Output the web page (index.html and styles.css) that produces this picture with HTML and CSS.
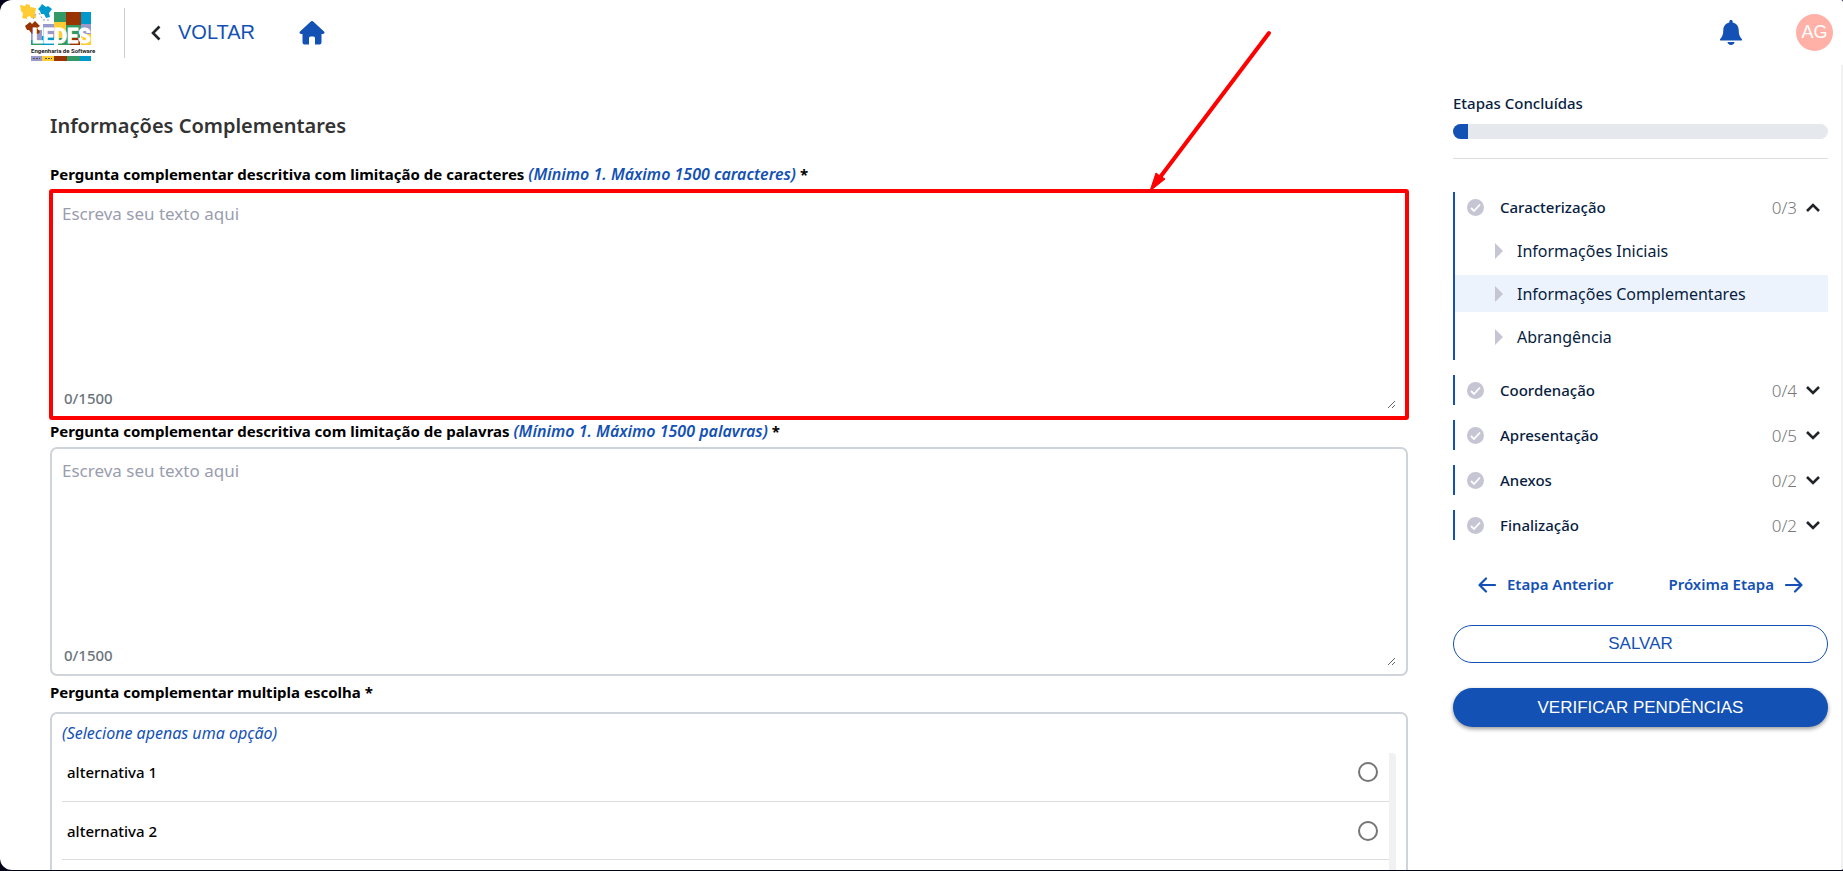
FILE: index.html
```html
<!DOCTYPE html>
<html lang="pt-BR">
<head>
<meta charset="utf-8">
<title>Informações Complementares</title>
<link rel="stylesheet" href="styles.css">
</head>
<body>
<div class="app">
  <header class="topbar">
    <svg class="logo" width="72" height="58" viewBox="20 4 72 58" role="img" aria-label="LEDES Engenharia de Software">
      <path fill="#339966" d="M54 12h12v10H54zM31 36h11v9H31zM66 33h14v12H66z"/>
      <path fill="#993300" d="M66 12h15v13H66zM66 38h14v7H66z"/>
      <path fill="#0099cc" d="M81 12h10v12H81zM42 36h12v9H42z"/>
      <path fill="#9999cc" d="M31 30h11v10H31zM43 24h11v12H43zM81 24h10v10H81z"/>
      <path fill="#ffcc33" d="M54 22h12v16H54zM81 34h10v11H81z"/>
      <path fill="#339966" d="M58 38h12v7H58zM66 25h15v9H66z"/>
      <path fill="#ffcc33" d="M20 5l5 1 1-2 4 1 0 2 6 1-1 6 1 4-5 0-1-2-3 1 0 2-5-1 1-5-2-2z"/>
      <path fill="#0099cc" d="M42 4l4 3 2-1 4 3-3 4 1 4-4 1-2-4-3 0-1-3-2-2 2-2z"/>
      <path fill="#993300" d="M25 26l5-4 2 2 3-3 5 5-3 2 3 4-2 2-3-1-3 1-3-4-2 0z"/>
      <path fill="none" stroke="#999" stroke-width="1" stroke-dasharray="2 2" d="M36 14l-3 5M39 13l4 7 7 0"/>
      <text class="logo-word" x="32" y="43">LEDES</text>
      <path fill="#fff" d="M30 45h62v10H30z"/>
      <text class="logo-sub" x="31" y="53">Engenharia de Software</text>
      <path fill="#9999cc" d="M31 56h11v5H31z"/><path fill="#ffcc33" d="M42 56h12v5H42z"/>
      <path fill="#993300" d="M54 56h13v5H54z"/><path fill="#339966" d="M67 56h13v5H67z"/>
      <path fill="#0099cc" d="M80 56h11v5H80z"/>
      <path stroke="#555" stroke-dasharray="2 1" d="M33 58.500h7M45 58.500h7"/>
    </svg>
    <a class="back" href="#">
      <svg width="10" height="16" viewBox="0 0 10 16"><path d="M8.500 1.500L2 8l6.500 6.500" fill="none" stroke="#212529" stroke-width="2.600"/></svg>
      VOLTAR
    </a>
    <a class="home" href="#" aria-label="Início">
      <svg width="26" height="24" viewBox="0 0 26 24" fill="#1351b4"><path d="M11.800.500a1.800 1.800 0 0 1 2.400 0L25 10.500c1 1 .4 2.500-1 2.500h-1.500v8.500a2 2 0 0 1-2 2H16V17a1.500 1.500 0 0 0-1.500-1.500h-3A1.500 1.500 0 0 0 10 17v6.500H5.500a2 2 0 0 1-2-2V13H2C.6 13 0 11.500 1 10.500z"/></svg>
    </a>
    <button class="bell" type="button" aria-label="Notificações">
      <svg width="22" height="26" viewBox="0 0 22 26" fill="#1351b4"><path d="M11 0c1 0 1.700.7 1.700 1.700v.7c3.800.8 6 3.700 6 7.600 0 4.500 1 6.700 3.100 9 .5.600.2 1.500-.7 1.500H.9c-.9 0-1.200-.9-.7-1.500 2.100-2.300 3.100-4.500 3.100-9 0-3.900 2.200-6.800 6-7.600v-.7C9.300.7 10 0 11 0zM7.500 22h7c0 1.600-1.500 3-3.500 3s-3.500-1.400-3.500-3z"/></svg>
    </button>
    <span class="avatar">AG</span>
  </header>
  <div class="body">
    <main class="form">
      <h1 class="title">Informações Complementares</h1>
      <label class="question" for="q1">Pergunta complementar descritiva com limitação de caracteres <em class="hint">(Mínimo 1. Máximo 1500 caracteres)</em> *</label>
      <div class="field field-marked">
        <textarea id="q1" class="entry" placeholder="Escreva seu texto aqui"></textarea>
        <span class="counter">0/1500</span>
        <svg class="arrow" width="126" height="166" viewBox="0 0 126 166"><path d="M122 5L14 148" stroke="#f00" stroke-width="4" stroke-linecap="round"/><path d="M3 163L9 145l4 3 5 3z" fill="#f00" stroke="#f00" stroke-width="1"/></svg>
      </div>
      <label class="question" for="q2">Pergunta complementar descritiva com limitação de palavras <em class="hint">(Mínimo 1. Máximo 1500 palavras)</em> *</label>
      <div class="field">
        <textarea id="q2" class="entry" placeholder="Escreva seu texto aqui"></textarea>
        <span class="counter">0/1500</span>
      </div>
      <fieldset class="choice">
        <legend class="question question-choice">Pergunta complementar multipla escolha *</legend>
        <div class="choice-box">
          <p class="choice-hint">(Selecione apenas uma opção)</p>
          <div class="options">
            <label class="option">alternativa 1<input class="radio" type="radio" name="alt"></label>
            <label class="option">alternativa 2<input class="radio" type="radio" name="alt"></label>
            <div class="option"></div>
          </div>
        </div>
      </fieldset>
    </main>
    <aside class="side">
      <h2 class="side-title">Etapas Concluídas</h2>
      <div class="progress"><div class="progress-fill"></div></div>
      <ul class="steps">
        <li class="step">
          <button class="step-head" type="button">
            <svg class="check" viewBox="0 0 17 17"><circle cx="8.500" cy="8.500" r="8.500" fill="#c5c5d3"/><path d="M4 9l3 3 6-6.500" fill="none" stroke="#fff" stroke-width="1.800"/></svg>
            <span class="step-name">Caracterização</span><span class="count">0/3</span>
            <svg class="chev" viewBox="0 0 14 9"><path d="M1 8l6-6 6 6" fill="none" stroke="#212529" stroke-width="2.600"/></svg>
          </button>
          <ul class="subs">
            <li><a class="sub" href="#">Informações Iniciais</a></li>
            <li><a class="sub sub-active" href="#">Informações Complementares</a></li>
            <li><a class="sub" href="#">Abrangência</a></li>
          </ul>
        </li>
        <li class="step">
          <button class="step-head" type="button">
            <svg class="check" viewBox="0 0 17 17"><circle cx="8.500" cy="8.500" r="8.500" fill="#c5c5d3"/><path d="M4 9l3 3 6-6.500" fill="none" stroke="#fff" stroke-width="1.800"/></svg>
            <span class="step-name">Coordenação</span><span class="count">0/4</span>
            <svg class="chev" viewBox="0 0 14 9"><path d="M1 1l6 6 6-6" fill="none" stroke="#212529" stroke-width="2.600"/></svg>
          </button>
        </li>
        <li class="step">
          <button class="step-head" type="button">
            <svg class="check" viewBox="0 0 17 17"><circle cx="8.500" cy="8.500" r="8.500" fill="#c5c5d3"/><path d="M4 9l3 3 6-6.500" fill="none" stroke="#fff" stroke-width="1.800"/></svg>
            <span class="step-name">Apresentação</span><span class="count">0/5</span>
            <svg class="chev" viewBox="0 0 14 9"><path d="M1 1l6 6 6-6" fill="none" stroke="#212529" stroke-width="2.600"/></svg>
          </button>
        </li>
        <li class="step">
          <button class="step-head" type="button">
            <svg class="check" viewBox="0 0 17 17"><circle cx="8.500" cy="8.500" r="8.500" fill="#c5c5d3"/><path d="M4 9l3 3 6-6.500" fill="none" stroke="#fff" stroke-width="1.800"/></svg>
            <span class="step-name">Anexos</span><span class="count">0/2</span>
            <svg class="chev" viewBox="0 0 14 9"><path d="M1 1l6 6 6-6" fill="none" stroke="#212529" stroke-width="2.600"/></svg>
          </button>
        </li>
        <li class="step">
          <button class="step-head" type="button">
            <svg class="check" viewBox="0 0 17 17"><circle cx="8.500" cy="8.500" r="8.500" fill="#c5c5d3"/><path d="M4 9l3 3 6-6.500" fill="none" stroke="#fff" stroke-width="1.800"/></svg>
            <span class="step-name">Finalização</span><span class="count">0/2</span>
            <svg class="chev" viewBox="0 0 14 9"><path d="M1 1l6 6 6-6" fill="none" stroke="#212529" stroke-width="2.600"/></svg>
          </button>
        </li>
      </ul>
      <nav class="pager">
        <button class="page-link" type="button"><svg width="18" height="16" viewBox="0 0 18 16"><path d="M17 8H2M8 1.500L1.500 8 8 14.500" fill="none" stroke="#1351b4" stroke-width="2.200" stroke-linecap="round" stroke-linejoin="round"/></svg>Etapa Anterior</button>
        <button class="page-link" type="button">Próxima Etapa<svg width="18" height="16" viewBox="0 0 18 16"><path d="M1 8h15M10 1.500L16.500 8 10 14.500" fill="none" stroke="#1351b4" stroke-width="2.200" stroke-linecap="round" stroke-linejoin="round"/></svg></button>
      </nav>
      <button class="btn btn-outline" type="button">SALVAR</button>
      <button class="btn btn-solid" type="button">VERIFICAR PENDÊNCIAS</button>
    </aside>
    <div class="track"></div>
  </div>
</div>
</body>
</html>
```

FILE: styles.css
```css
* { box-sizing: border-box; }
body { margin: 0; background: #03031a; font-family: "Noto Sans", sans-serif; color: #000; }
button { font: inherit; background: none; border: 0; padding: 0; }
ul { list-style: none; margin: 0; padding: 0; }
a { text-decoration: none; }
svg { display: block; flex: none; }

.app { height: calc(100vh - 1px); display: flex; flex-direction: column; overflow: hidden; background: #fff; border-radius: 12px 2px 2px 12px; }

.topbar { display: flex; align-items: center; height: 65px; flex: none; padding: 0 10px 0 20px; }
.logo { overflow: visible; }
.logo-word { font: bold 20px Roboto, sans-serif; fill: #fff; stroke: #fff; stroke-width: 1px; }
.logo-sub { font: bold 6px Roboto, sans-serif; fill: #222; }
.back { display: flex; align-items: center; gap: 17px; height: 50px; margin-left: 32px; padding-left: 26px; border-left: 1px solid #ccc; color: #1351b4; font: 20px "Liberation Sans", Arial, sans-serif; }
.home { margin-left: 44px; }
.bell { margin-left: auto; margin-right: 54px; }
.avatar { display: flex; align-items: center; justify-content: center; width: 37px; height: 37px; border-radius: 50%; background: #ffb1a8; color: #fff; font: 18px "Liberation Sans", Arial, sans-serif; }

.body { display: flex; flex: 1; min-height: 0; }
.form { flex: 1; min-width: 0; padding: 44px 0 0 50px; }
.title { margin: 0 0 23px; font: 600 20px/34px "Noto Sans", sans-serif; color: #333; }
.question { display: block; padding: 0 0 8px; font-weight: 700; font-size: 15px; line-height: 16px; }
.hint { color: #1351b4; font-size: 16px; font-weight: 600; line-height: 16px; }
.field { position: relative; height: 229px; margin-bottom: 4px; padding: 2px 10px 8px; border: 2px solid #ced4da; border-radius: 7px; }
.field-marked { outline: 4px solid #f00; outline-offset: -3px; border-radius: 2px; }
.entry { display: block; width: 100%; height: 100%; padding: 8px 0; border: 0; outline: 0; background: transparent; resize: vertical; font: 17px/24px "Noto Sans", sans-serif; }
.entry::placeholder { color: #9a9dae; opacity: 1; }
.counter { position: absolute; left: 12px; bottom: 9px; color: #6c757d; font-size: 15px; line-height: 20px; font-weight: 500; }
.arrow { position: absolute; right: 133px; bottom: 223px; }

.choice { margin: 0; padding: 0; border: 0; min-width: 0; }
.question-choice { line-height: 24px; }
.choice-box { padding: 7px 10px; border: 2px solid #ced4da; border-radius: 7px; }
.choice-hint { margin: 0 0 8px; color: #1351b4; font-style: italic; font-size: 16px; line-height: 24px; }
.options { border-right: 7px solid #f1f1f1; border-radius: 0 4px 0 0; }
.option { display: flex; align-items: center; justify-content: space-between; height: 58px; padding: 0 11px 0 5px; border-bottom: 1px solid #ddd; font-size: 15px; font-weight: 500; }
.option:first-child { height: 49px; padding-bottom: 10px; }
.radio { appearance: none; width: 20px; height: 20px; margin: 0; border: 2px solid #757575; border-radius: 50%; }

.side { flex: none; width: 375px; margin: 28px 13px 0 45px; }
.side-title { margin: 0 0 11px; color: #071d41; font-size: 15px; font-weight: 500; line-height: 20px; }
.progress { height: 15px; border-radius: 8px; background: #e5e8ed; overflow: hidden; }
.progress-fill { width: 4%; height: 100%; background: #1351b4; }
.steps { display: grid; gap: 15px; margin-top: 19px; padding-top: 33px; border-top: 1px solid #ddd; }
.step { border-left: 2px solid #1351b4; }
.step-head { display: flex; align-items: center; width: 100%; height: 30px; padding: 0 8px 0 12px; color: #071d41; font-size: 15px; text-align: left; }
.check { width: 17px; height: 17px; }
.step-name { flex: 1; margin-left: 16px; font-weight: 500; }
.count { color: #777; margin-right: 9px; font-size: 17px; font-weight: 300; }
.chev { width: 14px; height: 9px; }
.subs { display: grid; gap: 6px; padding: 10px 0 5px; }
.sub { display: flex; align-items: center; gap: 14px; height: 37px; padding-left: 40px; color: #071d41; font-size: 16px; }
.sub::before { content: ""; border-left: 8px solid #c5c5d3; border-top: 8px solid transparent; border-bottom: 8px solid transparent; }
.sub-active { background: #edf3fc; }
.pager { display: flex; justify-content: space-between; margin: 32px 25px 28px; }
.page-link { display: flex; align-items: center; gap: 11px; color: #1351b4; font-weight: 600; font-size: 15px; line-height: 25px; }
.btn { display: block; width: 100%; height: 38px; border-radius: 20px; font: 17px "Liberation Sans", Arial, sans-serif; }
.btn-outline { border: 1px solid #1351b4; color: #1351b4; margin-bottom: 25px; }
.btn-solid { height: 39px; background: #1351b4; color: #fff; box-shadow: 0 2px 4px rgba(0,0,0,.4); }
.track { flex: none; width: 2px; background: #f1f1f1; }
```
